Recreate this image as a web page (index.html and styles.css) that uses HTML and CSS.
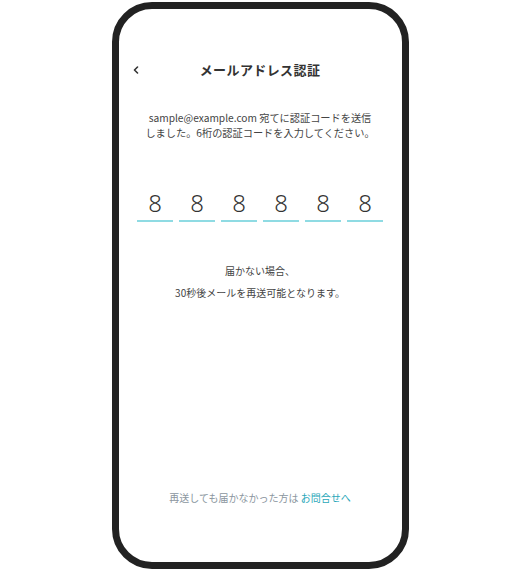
FILE: index.html
```html
<!DOCTYPE html>
<html lang="ja">
<head>
<meta charset="utf-8">
<link rel="stylesheet" href="styles.css">
</head>
<body>
<div class="phone">
  <div class="screen">
    <header class="header">
      <span class="back">
        <svg width="6" height="8" viewBox="0 0 6 8"><path d="M4.5 1 L1.5 4 L4.5 7" fill="none" stroke="#333" stroke-width="1.6" stroke-linecap="round" stroke-linejoin="round"/></svg>
      </span>
      <h1 class="title">メールアドレス認証</h1>
    </header>
    <p class="desc">sample@example.com 宛てに認証コードを送信<br>しました。6桁の認証コードを入力してください。</p>
    <div class="code">
      <span class="digit">8</span>
      <span class="digit">8</span>
      <span class="digit">8</span>
      <span class="digit">8</span>
      <span class="digit">8</span>
      <span class="digit">8</span>
    </div>
    <p class="notice">届かない場合、<br>30秒後メールを再送可能となります。</p>
    <p class="footer">再送しても届かなかった方は <a class="link" href="#">お問合せへ</a></p>
  </div>
</div>
</body>
</html>
```

FILE: styles.css
```css
* { box-sizing: border-box; }
html, body { margin: 0; padding: 0; background: #fff; }
body {
  font-family: "Noto Sans CJK JP", "Noto Sans", sans-serif;
  color: #333;
  display: flex;
  justify-content: center;
}
.phone {
  width: 297px;
  height: 567px;
  margin-top: 2px;
  border: 7px solid #222;
  border-radius: 40px;
  background: #fff;
  overflow: hidden;
}
.screen {
  height: 100%;
  display: flex;
  flex-direction: column;
  align-items: center;
}
.header {
  position: relative;
  width: 100%;
  padding-top: 50px;
  display: flex;
  justify-content: center;
}
.back {
  position: absolute;
  left: 14px;
  top: 57px;
  display: flex;
}
.title {
  margin: 0;
  font-size: 13px;
  font-weight: 700;
  letter-spacing: 0.4px;
  line-height: 22px;
  color: #333;
}
.desc {
  margin: 29px 0 0;
  font-size: 10.2px;
  line-height: 15px;
  text-align: center;
  color: #444;
}
.code {
  margin-top: 47px;
  display: flex;
  gap: 6px;
}
.digit {
  width: 36px;
  height: 35px;
  padding-bottom: 3px;
  font-family: "Noto Sans", sans-serif;
  font-size: 24px;
  line-height: 31px;
  font-weight: 300;
  text-align: center;
  color: #333;
  border-bottom: 2px solid #8fdbe3;
}
.notice {
  margin: 38px 0 0;
  font-size: 10px;
  line-height: 22px;
  text-align: center;
  color: #444;
}
.footer {
  margin: auto 0 56px;
  font-size: 10px;
  line-height: 16px;
  color: #8a959e;
}
.link {
  color: #2aa7b9;
  text-decoration: none;
}
```
